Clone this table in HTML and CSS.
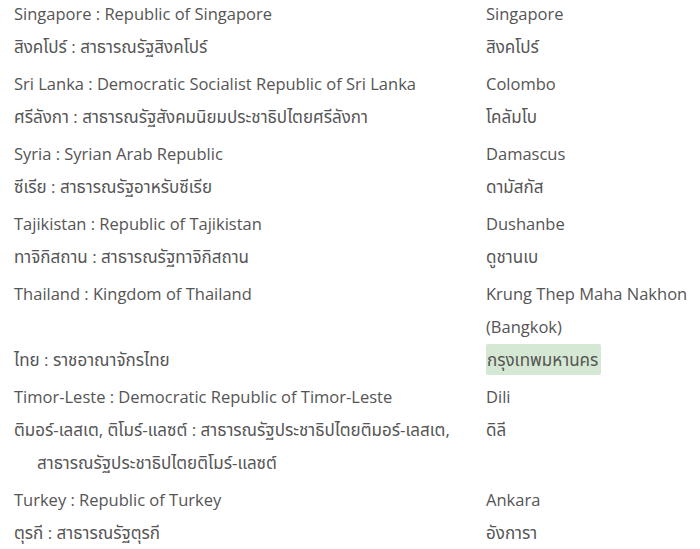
FILE: index.html
```html
<!DOCTYPE html>
<html lang="th">
<head>
<meta charset="utf-8">
<link rel="stylesheet" href="styles.css">
</head>
<body>
<div class="list">
  <div class="group">
    <div class="row"><div class="name">Singapore : Republic of Singapore</div><div class="cap">Singapore</div></div>
    <div class="row th"><div class="name">สิงคโปร์ : สาธารณรัฐสิงคโปร์</div><div class="cap">สิงคโปร์</div></div>
  </div>
  <div class="group">
    <div class="row"><div class="name">Sri Lanka : Democratic Socialist Republic of Sri Lanka</div><div class="cap">Colombo</div></div>
    <div class="row th"><div class="name">ศรีลังกา : สาธารณรัฐสังคมนิยมประชาธิปไตยศรีลังกา</div><div class="cap">โคลัมโบ</div></div>
  </div>
  <div class="group">
    <div class="row"><div class="name">Syria : Syrian Arab Republic</div><div class="cap">Damascus</div></div>
    <div class="row th"><div class="name">ซีเรีย : สาธารณรัฐอาหรับซีเรีย</div><div class="cap">ดามัสกัส</div></div>
  </div>
  <div class="group">
    <div class="row"><div class="name">Tajikistan : Republic of Tajikistan</div><div class="cap">Dushanbe</div></div>
    <div class="row th"><div class="name">ทาจิกิสถาน : สาธารณรัฐทาจิกิสถาน</div><div class="cap">ดูชานเบ</div></div>
  </div>
  <div class="group">
    <div class="row"><div class="name">Thailand : Kingdom of Thailand</div><div class="cap">Krung Thep Maha Nakhon<br>(Bangkok)</div></div>
    <div class="row th"><div class="name">ไทย : ราชอาณาจักรไทย</div><div class="cap"><span class="mark">กรุงเทพมหานคร</span></div></div>
  </div>
  <div class="group">
    <div class="row"><div class="name">Timor-Leste : Democratic Republic of Timor-Leste</div><div class="cap">Dili</div></div>
    <div class="row th"><div class="name">ติมอร์-เลสเต, ติโมร์-แลซต์ : สาธารณรัฐประชาธิปไตยติมอร์-เลสเต,<br>สาธารณรัฐประชาธิปไตยติโมร์-แลซต์</div><div class="cap">ดิลี</div></div>
  </div>
  <div class="group">
    <div class="row"><div class="name">Turkey : Republic of Turkey</div><div class="cap">Ankara</div></div>
    <div class="row th"><div class="name">ตุรกี : สาธารณรัฐตุรกี</div><div class="cap">อังการา</div></div>
  </div>
</div>
</body>
</html>
```
FILE: styles.css
```css
html, body {
  margin: 0;
  padding: 0;
  background: #ffffff;
}
body {
  font-family: "Open Sans", "Noto Sans Thai", "Leelawadee UI", "Noto Sans", sans-serif;
  font-size: 16.5px;
  color: #555555;
}
.list {
  margin-top: -3px;
  padding-left: 14px;
}
.group {
  margin-bottom: 4px;
}
.row {
  display: grid;
  grid-template-columns: 472px 214px;
  line-height: 33px;
}
.row.th {
  font-size: 17px;
}
.name {
  padding-left: 23px;
  text-indent: -23px;
  padding-right: 4px;
}
.mark {
  display: inline-block;
  line-height: 31px;
  padding: 0 3px 0 1px;
  border-radius: 2px;
  background: #d5e8d3;
}
```
